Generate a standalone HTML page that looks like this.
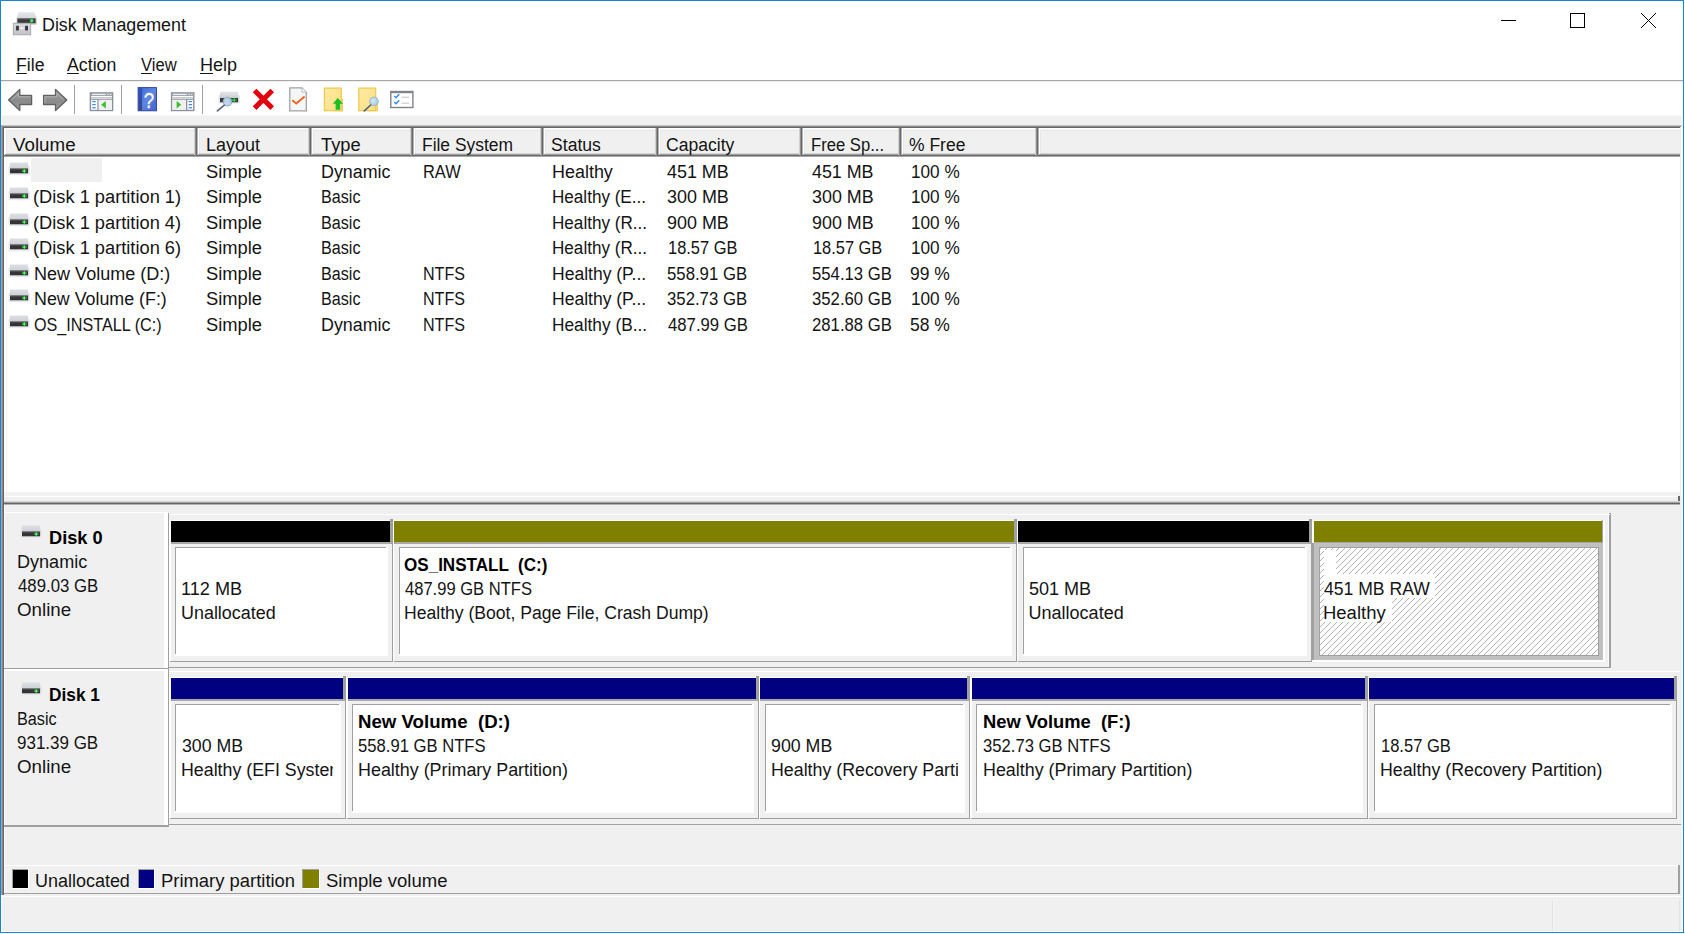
<!DOCTYPE html>
<html lang="en"><head><meta charset="utf-8"><title>Disk Management</title>
<style>
html,body{margin:0;padding:0;background:#fff;}
body{width:1685px;height:934px;position:relative;overflow:hidden;font-family:'Liberation Sans', sans-serif;font-size:18px;line-height:20px;color:#141414;}
#win{position:absolute;left:0;top:0;width:1682px;height:931px;border:1px solid #1883d7;background:#fff;}
#root div,#root svg,#root span.t{position:absolute;}
#root{position:absolute;left:0;top:0;width:1685px;height:934px;}
span.t{white-space:pre;transform-origin:0 0;display:block;}
u{text-decoration-thickness:1px;text-underline-offset:2px;}
</style></head><body>
<div id="win"></div>
<div id="root">
<div style="left:2px;top:115px;width:1680px;height:816px;background:#f0f0f0;"></div>
<svg style="left:1490px;top:5px" width="180" height="32" viewBox="1490 5 180 32" shape-rendering="crispEdges">
<rect x="1501" y="20" width="15" height="1" fill="#000"/>
<rect x="1570.5" y="13.5" width="14" height="14" fill="none" stroke="#000" stroke-width="1"/>
<g shape-rendering="geometricPrecision" stroke="#000" stroke-width="1.0"><line x1="1641" y1="13" x2="1656" y2="28"/><line x1="1656" y1="13" x2="1641" y2="28"/></g>
</svg>
<div style="left:1px;top:80px;width:1682px;height:1px;background:#a6a6a6;"></div>
<div style="left:1px;top:81px;width:1682px;height:1px;background:#f0f0f0;"></div>
<div style="left:74px;top:85px;width:1px;height:29px;background:#a0a0a0;"></div>
<div style="left:121px;top:85px;width:1px;height:29px;background:#a0a0a0;"></div>
<div style="left:202px;top:85px;width:1px;height:29px;background:#a0a0a0;"></div>
<div style="left:2px;top:115px;width:1680px;height:1px;background:#f8f8f8;"></div>
<div style="left:2px;top:125px;width:1680px;height:1px;background:#c4c4c4;"></div>
<div style="left:2px;top:126px;width:1679px;height:1px;background:#8c8c8c;"></div>
<div style="left:3px;top:127px;width:1678px;height:1px;background:#666;"></div>
<div style="left:1px;top:125px;width:1px;height:770px;background:#a8a29e;"></div>
<div style="left:2px;top:126px;width:1px;height:769px;background:#8a8a8a;"></div>
<div style="left:3px;top:127px;width:1px;height:768px;background:#646464;"></div>
<div style="left:4px;top:128px;width:1676px;height:364px;background:#fff;"></div>
<div style="left:1680px;top:127px;width:1px;height:369px;background:#ececec;"></div>
<div style="left:1681px;top:126px;width:1px;height:371px;background:#fff;"></div>
<div style="left:4px;top:128px;width:1676px;height:29px;background:#f0f0f0;"></div>
<div style="left:4px;top:128px;width:1676px;height:1px;background:#fff;"></div>
<div style="left:4px;top:129px;width:1676px;height:1px;background:#f8f8f8;"></div>
<div style="left:4px;top:130px;width:1676px;height:1px;background:#e8e8e8;"></div>
<div style="left:4px;top:153px;width:1676px;height:1px;background:#d4d4d4;"></div>
<div style="left:4px;top:154px;width:1676px;height:1px;background:#a0a0a0;"></div>
<div style="left:4px;top:155px;width:1676px;height:1px;background:#6a6a6a;"></div>
<div style="left:4px;top:156px;width:1676px;height:1px;background:#a8a8a8;"></div>
<div style="left:4px;top:128px;width:1px;height:27px;background:#fff;"></div>
<div style="left:5px;top:129px;width:1px;height:25px;background:#fcfcfc;"></div>
<div style="left:6px;top:130px;width:1px;height:23px;background:#e8e8e8;"></div>
<div style="left:194px;top:128px;width:1px;height:27px;background:#d0d0d0;"></div>
<div style="left:195px;top:128px;width:1px;height:28px;background:#909090;"></div>
<div style="left:196px;top:128px;width:1px;height:28px;background:#686868;"></div>
<div style="left:197px;top:128px;width:1px;height:27px;background:#b4b4b4;"></div>
<div style="left:198px;top:128px;width:1px;height:26px;background:#fff;"></div>
<div style="left:199px;top:130px;width:1px;height:23px;background:#e8e8e8;"></div>
<div style="left:308px;top:128px;width:1px;height:27px;background:#d0d0d0;"></div>
<div style="left:309px;top:128px;width:1px;height:28px;background:#909090;"></div>
<div style="left:310px;top:128px;width:1px;height:28px;background:#686868;"></div>
<div style="left:311px;top:128px;width:1px;height:27px;background:#b4b4b4;"></div>
<div style="left:312px;top:128px;width:1px;height:26px;background:#fff;"></div>
<div style="left:313px;top:130px;width:1px;height:23px;background:#e8e8e8;"></div>
<div style="left:410px;top:128px;width:1px;height:27px;background:#d0d0d0;"></div>
<div style="left:411px;top:128px;width:1px;height:28px;background:#909090;"></div>
<div style="left:412px;top:128px;width:1px;height:28px;background:#686868;"></div>
<div style="left:413px;top:128px;width:1px;height:27px;background:#b4b4b4;"></div>
<div style="left:414px;top:128px;width:1px;height:26px;background:#fff;"></div>
<div style="left:415px;top:130px;width:1px;height:23px;background:#e8e8e8;"></div>
<div style="left:539.5px;top:128px;width:1px;height:27px;background:#d0d0d0;"></div>
<div style="left:540.5px;top:128px;width:1px;height:28px;background:#909090;"></div>
<div style="left:541.5px;top:128px;width:1px;height:28px;background:#686868;"></div>
<div style="left:542.5px;top:128px;width:1px;height:27px;background:#b4b4b4;"></div>
<div style="left:543.5px;top:128px;width:1px;height:26px;background:#fff;"></div>
<div style="left:544.5px;top:130px;width:1px;height:23px;background:#e8e8e8;"></div>
<div style="left:655px;top:128px;width:1px;height:27px;background:#d0d0d0;"></div>
<div style="left:656px;top:128px;width:1px;height:28px;background:#909090;"></div>
<div style="left:657px;top:128px;width:1px;height:28px;background:#686868;"></div>
<div style="left:658px;top:128px;width:1px;height:27px;background:#b4b4b4;"></div>
<div style="left:659px;top:128px;width:1px;height:26px;background:#fff;"></div>
<div style="left:660px;top:130px;width:1px;height:23px;background:#e8e8e8;"></div>
<div style="left:798.5px;top:128px;width:1px;height:27px;background:#d0d0d0;"></div>
<div style="left:799.5px;top:128px;width:1px;height:28px;background:#909090;"></div>
<div style="left:800.5px;top:128px;width:1px;height:28px;background:#686868;"></div>
<div style="left:801.5px;top:128px;width:1px;height:27px;background:#b4b4b4;"></div>
<div style="left:802.5px;top:128px;width:1px;height:26px;background:#fff;"></div>
<div style="left:803.5px;top:130px;width:1px;height:23px;background:#e8e8e8;"></div>
<div style="left:897.5px;top:128px;width:1px;height:27px;background:#d0d0d0;"></div>
<div style="left:898.5px;top:128px;width:1px;height:28px;background:#909090;"></div>
<div style="left:899.5px;top:128px;width:1px;height:28px;background:#686868;"></div>
<div style="left:900.5px;top:128px;width:1px;height:27px;background:#b4b4b4;"></div>
<div style="left:901.5px;top:128px;width:1px;height:26px;background:#fff;"></div>
<div style="left:902.5px;top:130px;width:1px;height:23px;background:#e8e8e8;"></div>
<div style="left:1034.5px;top:128px;width:1px;height:27px;background:#d0d0d0;"></div>
<div style="left:1035.5px;top:128px;width:1px;height:28px;background:#909090;"></div>
<div style="left:1036.5px;top:128px;width:1px;height:28px;background:#686868;"></div>
<div style="left:1037.5px;top:128px;width:1px;height:27px;background:#b4b4b4;"></div>
<div style="left:1038.5px;top:128px;width:1px;height:26px;background:#fff;"></div>
<div style="left:1039.5px;top:130px;width:1px;height:23px;background:#e8e8e8;"></div>
<div style="left:31px;top:157.5px;width:70.5px;height:24.5px;background:#f0f0f0;"></div>
<svg style="left:8px;top:161.8px" width="23" height="14" viewBox="0 0 23 14">
<defs><linearGradient id="dg1" x1="0" y1="0" x2="0" y2="1"><stop offset="0" stop-color="#dcdfe3"/><stop offset="1" stop-color="#cdd0d6"/></linearGradient></defs>
<rect x="0.5" y="4" width="21.3" height="9.3" rx="1.2" fill="#e6e9ee"/>
<path d="M2 0.6h18l0.4 6H1.6z" fill="url(#dg1)"/>
<rect x="2" y="6.6" width="18.1" height="4.7" fill="#343434"/>
<rect x="2" y="6.6" width="18.1" height="1" fill="#5a5a5a"/>
<rect x="14" y="8.4" width="4.6" height="1.3" fill="#2bd23c"/><rect x="15.6" y="6.9" width="1.4" height="4.3" fill="#2bd23c"/><rect x="15.5" y="8.3" width="1.6" height="1.5" fill="#7dff8a"/>
</svg>
<svg style="left:8px;top:187.3px" width="23" height="14" viewBox="0 0 23 14">
<defs><linearGradient id="dg2" x1="0" y1="0" x2="0" y2="1"><stop offset="0" stop-color="#dcdfe3"/><stop offset="1" stop-color="#cdd0d6"/></linearGradient></defs>
<rect x="0.5" y="4" width="21.3" height="9.3" rx="1.2" fill="#e6e9ee"/>
<path d="M2 0.6h18l0.4 6H1.6z" fill="url(#dg2)"/>
<rect x="2" y="6.6" width="18.1" height="4.7" fill="#343434"/>
<rect x="2" y="6.6" width="18.1" height="1" fill="#5a5a5a"/>
<rect x="14" y="8.4" width="4.6" height="1.3" fill="#2bd23c"/><rect x="15.6" y="6.9" width="1.4" height="4.3" fill="#2bd23c"/><rect x="15.5" y="8.3" width="1.6" height="1.5" fill="#7dff8a"/>
</svg>
<svg style="left:8px;top:212.8px" width="23" height="14" viewBox="0 0 23 14">
<defs><linearGradient id="dg3" x1="0" y1="0" x2="0" y2="1"><stop offset="0" stop-color="#dcdfe3"/><stop offset="1" stop-color="#cdd0d6"/></linearGradient></defs>
<rect x="0.5" y="4" width="21.3" height="9.3" rx="1.2" fill="#e6e9ee"/>
<path d="M2 0.6h18l0.4 6H1.6z" fill="url(#dg3)"/>
<rect x="2" y="6.6" width="18.1" height="4.7" fill="#343434"/>
<rect x="2" y="6.6" width="18.1" height="1" fill="#5a5a5a"/>
<rect x="14" y="8.4" width="4.6" height="1.3" fill="#2bd23c"/><rect x="15.6" y="6.9" width="1.4" height="4.3" fill="#2bd23c"/><rect x="15.5" y="8.3" width="1.6" height="1.5" fill="#7dff8a"/>
</svg>
<svg style="left:8px;top:238.3px" width="23" height="14" viewBox="0 0 23 14">
<defs><linearGradient id="dg4" x1="0" y1="0" x2="0" y2="1"><stop offset="0" stop-color="#dcdfe3"/><stop offset="1" stop-color="#cdd0d6"/></linearGradient></defs>
<rect x="0.5" y="4" width="21.3" height="9.3" rx="1.2" fill="#e6e9ee"/>
<path d="M2 0.6h18l0.4 6H1.6z" fill="url(#dg4)"/>
<rect x="2" y="6.6" width="18.1" height="4.7" fill="#343434"/>
<rect x="2" y="6.6" width="18.1" height="1" fill="#5a5a5a"/>
<rect x="14" y="8.4" width="4.6" height="1.3" fill="#2bd23c"/><rect x="15.6" y="6.9" width="1.4" height="4.3" fill="#2bd23c"/><rect x="15.5" y="8.3" width="1.6" height="1.5" fill="#7dff8a"/>
</svg>
<svg style="left:8px;top:263.8px" width="23" height="14" viewBox="0 0 23 14">
<defs><linearGradient id="dg5" x1="0" y1="0" x2="0" y2="1"><stop offset="0" stop-color="#dcdfe3"/><stop offset="1" stop-color="#cdd0d6"/></linearGradient></defs>
<rect x="0.5" y="4" width="21.3" height="9.3" rx="1.2" fill="#e6e9ee"/>
<path d="M2 0.6h18l0.4 6H1.6z" fill="url(#dg5)"/>
<rect x="2" y="6.6" width="18.1" height="4.7" fill="#343434"/>
<rect x="2" y="6.6" width="18.1" height="1" fill="#5a5a5a"/>
<rect x="14" y="8.4" width="4.6" height="1.3" fill="#2bd23c"/><rect x="15.6" y="6.9" width="1.4" height="4.3" fill="#2bd23c"/><rect x="15.5" y="8.3" width="1.6" height="1.5" fill="#7dff8a"/>
</svg>
<svg style="left:8px;top:289.3px" width="23" height="14" viewBox="0 0 23 14">
<defs><linearGradient id="dg6" x1="0" y1="0" x2="0" y2="1"><stop offset="0" stop-color="#dcdfe3"/><stop offset="1" stop-color="#cdd0d6"/></linearGradient></defs>
<rect x="0.5" y="4" width="21.3" height="9.3" rx="1.2" fill="#e6e9ee"/>
<path d="M2 0.6h18l0.4 6H1.6z" fill="url(#dg6)"/>
<rect x="2" y="6.6" width="18.1" height="4.7" fill="#343434"/>
<rect x="2" y="6.6" width="18.1" height="1" fill="#5a5a5a"/>
<rect x="14" y="8.4" width="4.6" height="1.3" fill="#2bd23c"/><rect x="15.6" y="6.9" width="1.4" height="4.3" fill="#2bd23c"/><rect x="15.5" y="8.3" width="1.6" height="1.5" fill="#7dff8a"/>
</svg>
<svg style="left:8px;top:314.8px" width="23" height="14" viewBox="0 0 23 14">
<defs><linearGradient id="dg7" x1="0" y1="0" x2="0" y2="1"><stop offset="0" stop-color="#dcdfe3"/><stop offset="1" stop-color="#cdd0d6"/></linearGradient></defs>
<rect x="0.5" y="4" width="21.3" height="9.3" rx="1.2" fill="#e6e9ee"/>
<path d="M2 0.6h18l0.4 6H1.6z" fill="url(#dg7)"/>
<rect x="2" y="6.6" width="18.1" height="4.7" fill="#343434"/>
<rect x="2" y="6.6" width="18.1" height="1" fill="#5a5a5a"/>
<rect x="14" y="8.4" width="4.6" height="1.3" fill="#2bd23c"/><rect x="15.6" y="6.9" width="1.4" height="4.3" fill="#2bd23c"/><rect x="15.5" y="8.3" width="1.6" height="1.5" fill="#7dff8a"/>
</svg>
<div style="left:4px;top:492px;width:1676px;height:4px;background:#f2f2f2;"></div>
<div style="left:4px;top:496px;width:1674px;height:1px;background:#fff;"></div>
<div style="left:4px;top:497px;width:1674px;height:4px;background:#f0f0f0;"></div>
<div style="left:1677.5px;top:496px;width:2.5px;height:8px;background:#696969;"></div>
<div style="left:4px;top:501px;width:1676px;height:1px;background:#d4d4d4;"></div>
<div style="left:4px;top:502px;width:1676px;height:1px;background:#a0a0a0;"></div>
<div style="left:4px;top:503px;width:1676px;height:1px;background:#666;"></div>
<div style="left:4px;top:504px;width:1676px;height:1px;background:#b4b4b4;"></div>
<div style="left:4px;top:505px;width:1px;height:389px;background:#fff;"></div>
<div style="left:1608px;top:514px;width:1.4px;height:153px;background:#fafafa;"></div>
<div style="left:1609.4px;top:513px;width:1.5px;height:155px;background:#a0a0a0;"></div>
<div style="left:4px;top:512px;width:160px;height:1.4px;background:#fff;"></div>
<div style="left:163.5px;top:512px;width:4px;height:157.5px;background:#fff;"></div>
<div style="left:4px;top:668px;width:164.5px;height:1.5px;background:#a0a0a0;"></div>
<div style="left:168px;top:512.5px;width:1px;height:156px;background:#a0a0a0;"></div>
<div style="left:169px;top:514px;width:1441px;height:1px;background:#fff;"></div>
<div style="left:169px;top:666.6px;width:1442px;height:1.4px;background:#a0a0a0;"></div>
<svg style="left:20px;top:524.8px" width="23" height="14" viewBox="0 0 23 14">
<defs><linearGradient id="dg8" x1="0" y1="0" x2="0" y2="1"><stop offset="0" stop-color="#dcdfe3"/><stop offset="1" stop-color="#cdd0d6"/></linearGradient></defs>
<rect x="0.5" y="4" width="21.3" height="9.3" rx="1.2" fill="#e6e9ee"/>
<path d="M2 0.6h18l0.4 6H1.6z" fill="url(#dg8)"/>
<rect x="2" y="6.6" width="18.1" height="4.7" fill="#343434"/>
<rect x="2" y="6.6" width="18.1" height="1" fill="#5a5a5a"/>
<rect x="14" y="8.4" width="4.6" height="1.3" fill="#2bd23c"/><rect x="15.6" y="6.9" width="1.4" height="4.3" fill="#2bd23c"/><rect x="15.5" y="8.3" width="1.6" height="1.5" fill="#7dff8a"/>
</svg>
<div style="left:169px;top:520px;width:220.60000000000002px;height:1px;background:#fff;"></div>
<div style="left:169px;top:520px;width:1.5px;height:141px;background:#fff;"></div>
<div style="left:170.5px;top:521px;width:219.10000000000002px;height:21px;background:#000;"></div>
<div style="left:389.6px;top:519px;width:3px;height:24px;background:#a0a0a0;"></div>
<div style="left:391.6px;top:543px;width:1px;height:119px;background:#a0a0a0;"></div>
<div style="left:170.5px;top:542px;width:221.10000000000002px;height:1.5px;background:#a8a8a8;"></div>
<div style="left:170px;top:660.7px;width:222.60000000000002px;height:1.3px;background:#a0a0a0;"></div>
<div style="left:175.4px;top:547px;width:212.20000000000002px;height:109px;background:#fff;"></div>
<div style="left:175.4px;top:547px;width:210.20000000000002px;height:1px;background:#a0a0a0;"></div>
<div style="left:175.4px;top:547px;width:1px;height:107px;background:#a0a0a0;"></div>
<div style="left:392.6px;top:520px;width:621.1999999999999px;height:1px;background:#fff;"></div>
<div style="left:392.6px;top:520px;width:1.5px;height:141px;background:#fff;"></div>
<div style="left:394.1px;top:521px;width:619.6999999999999px;height:21px;background:#808000;"></div>
<div style="left:1013.8px;top:519px;width:3px;height:24px;background:#a0a0a0;"></div>
<div style="left:1015.8px;top:543px;width:1px;height:119px;background:#a0a0a0;"></div>
<div style="left:394.1px;top:542px;width:621.6999999999999px;height:1.5px;background:#a8a8a8;"></div>
<div style="left:393.6px;top:660.7px;width:623.1999999999999px;height:1.3px;background:#a0a0a0;"></div>
<div style="left:399.0px;top:547px;width:612.8px;height:109px;background:#fff;"></div>
<div style="left:399.0px;top:547px;width:610.8px;height:1px;background:#a0a0a0;"></div>
<div style="left:399.0px;top:547px;width:1px;height:107px;background:#a0a0a0;"></div>
<div style="left:1016.8px;top:520px;width:292.0px;height:1px;background:#fff;"></div>
<div style="left:1016.8px;top:520px;width:1.5px;height:141px;background:#fff;"></div>
<div style="left:1018.3px;top:521px;width:290.5px;height:21px;background:#000;"></div>
<div style="left:1308.8px;top:519px;width:3px;height:24px;background:#a0a0a0;"></div>
<div style="left:1310.8px;top:543px;width:1px;height:119px;background:#a0a0a0;"></div>
<div style="left:1018.3px;top:542px;width:292.5px;height:1.5px;background:#a8a8a8;"></div>
<div style="left:1017.8px;top:660.7px;width:294.0px;height:1.3px;background:#a0a0a0;"></div>
<div style="left:1023.1999999999999px;top:547px;width:283.6px;height:109px;background:#fff;"></div>
<div style="left:1023.1999999999999px;top:547px;width:281.6px;height:1px;background:#a0a0a0;"></div>
<div style="left:1023.1999999999999px;top:547px;width:1px;height:107px;background:#a0a0a0;"></div>
<div style="left:1312.4px;top:520px;width:288.5999999999999px;height:1px;background:#fff;"></div>
<div style="left:1312.4px;top:520px;width:1.5px;height:141px;background:#fff;"></div>
<div style="left:1313.9px;top:521px;width:287.8999999999999px;height:21px;background:#808000;"></div>
<div style="left:1601.8px;top:519.5px;width:1.3px;height:23px;background:#a0a0a0;"></div>
<div style="left:1603px;top:520px;width:2px;height:142px;background:#fff;"></div>
<div style="left:1312.4px;top:660px;width:292.5999999999999px;height:2px;background:#fff;"></div>
<div style="left:1313.9px;top:542px;width:289.0999999999999px;height:1.5px;background:#a8a8a8;"></div>
<div style="left:1313.6px;top:542.6px;width:289.6px;height:117px;background:#c0c0c0;"></div>
<div style="left:1311.2px;top:542.6px;width:2.6px;height:117.6px;background:#a0a0a0;"></div>
<div style="left:1319px;top:547px;width:280px;height:109px;background:#a0a0a0;"></div>
<svg style="left:1320px;top:548px" width="278" height="107" viewBox="1320 548 278 107" shape-rendering="crispEdges"><defs><pattern id="hat" patternUnits="userSpaceOnUse" x="0" y="0" width="6" height="6"><rect width="6" height="6" fill="#fff"/><g fill="#b0b0b0"><rect x="0" y="2" width="1" height="1"/><rect x="1" y="1" width="1" height="1"/><rect x="2" y="0" width="1" height="1"/><rect x="3" y="5" width="1" height="1"/><rect x="4" y="4" width="1" height="1"/><rect x="5" y="3" width="1" height="1"/></g></pattern></defs><rect x="1320" y="548" width="278" height="107" fill="url(#hat)"/></svg>
<div style="left:1324px;top:550px;width:12px;height:24px;background:#fff;"></div>
<div style="left:1324px;top:574px;width:111px;height:24px;background:#fff;"></div>
<div style="left:1324px;top:598px;width:68px;height:24px;background:#fff;"></div>
<div style="left:4px;top:669.3px;width:160px;height:1.4px;background:#fff;"></div>
<div style="left:163.5px;top:669.3px;width:4px;height:157.5px;background:#fff;"></div>
<div style="left:4px;top:825.3px;width:164.5px;height:1.5px;background:#a0a0a0;"></div>
<div style="left:168px;top:669.8px;width:1px;height:156px;background:#a0a0a0;"></div>
<div style="left:169px;top:671.3px;width:1511px;height:1px;background:#fff;"></div>
<div style="left:169px;top:823.9px;width:1512px;height:1.4px;background:#a0a0a0;"></div>
<svg style="left:20px;top:682.0999999999999px" width="23" height="14" viewBox="0 0 23 14">
<defs><linearGradient id="dg9" x1="0" y1="0" x2="0" y2="1"><stop offset="0" stop-color="#dcdfe3"/><stop offset="1" stop-color="#cdd0d6"/></linearGradient></defs>
<rect x="0.5" y="4" width="21.3" height="9.3" rx="1.2" fill="#e6e9ee"/>
<path d="M2 0.6h18l0.4 6H1.6z" fill="url(#dg9)"/>
<rect x="2" y="6.6" width="18.1" height="4.7" fill="#343434"/>
<rect x="2" y="6.6" width="18.1" height="1" fill="#5a5a5a"/>
<rect x="14" y="8.4" width="4.6" height="1.3" fill="#2bd23c"/><rect x="15.6" y="6.9" width="1.4" height="4.3" fill="#2bd23c"/><rect x="15.5" y="8.3" width="1.6" height="1.5" fill="#7dff8a"/>
</svg>
<div style="left:169px;top:677.3px;width:174px;height:1px;background:#fff;"></div>
<div style="left:169px;top:677.3px;width:1.5px;height:141px;background:#fff;"></div>
<div style="left:170.5px;top:678.3px;width:172.5px;height:21px;background:#000080;"></div>
<div style="left:343px;top:676.3px;width:3px;height:24px;background:#a0a0a0;"></div>
<div style="left:345px;top:700.3px;width:1px;height:119px;background:#a0a0a0;"></div>
<div style="left:170.5px;top:699.3px;width:174.5px;height:1.5px;background:#a8a8a8;"></div>
<div style="left:170px;top:818.0px;width:176px;height:1.3px;background:#a0a0a0;"></div>
<div style="left:175.4px;top:704.3px;width:165.6px;height:109.0px;background:#fff;"></div>
<div style="left:175.4px;top:704.3px;width:163.6px;height:1px;background:#a0a0a0;"></div>
<div style="left:175.4px;top:704.3px;width:1px;height:107.0px;background:#a0a0a0;"></div>
<div style="left:346px;top:677.3px;width:409.79999999999995px;height:1px;background:#fff;"></div>
<div style="left:346px;top:677.3px;width:1.5px;height:141px;background:#fff;"></div>
<div style="left:347.5px;top:678.3px;width:408.29999999999995px;height:21px;background:#000080;"></div>
<div style="left:755.8px;top:676.3px;width:3px;height:24px;background:#a0a0a0;"></div>
<div style="left:757.8px;top:700.3px;width:1px;height:119px;background:#a0a0a0;"></div>
<div style="left:347.5px;top:699.3px;width:410.29999999999995px;height:1.5px;background:#a8a8a8;"></div>
<div style="left:347px;top:818.0px;width:411.79999999999995px;height:1.3px;background:#a0a0a0;"></div>
<div style="left:352.4px;top:704.3px;width:401.4px;height:109.0px;background:#fff;"></div>
<div style="left:352.4px;top:704.3px;width:399.4px;height:1px;background:#a0a0a0;"></div>
<div style="left:352.4px;top:704.3px;width:1px;height:107.0px;background:#a0a0a0;"></div>
<div style="left:758.8px;top:677.3px;width:208.20000000000005px;height:1px;background:#fff;"></div>
<div style="left:758.8px;top:677.3px;width:1.5px;height:141px;background:#fff;"></div>
<div style="left:760.3px;top:678.3px;width:206.70000000000005px;height:21px;background:#000080;"></div>
<div style="left:967px;top:676.3px;width:3px;height:24px;background:#a0a0a0;"></div>
<div style="left:969px;top:700.3px;width:1px;height:119px;background:#a0a0a0;"></div>
<div style="left:760.3px;top:699.3px;width:208.70000000000005px;height:1.5px;background:#a8a8a8;"></div>
<div style="left:759.8px;top:818.0px;width:210.20000000000005px;height:1.3px;background:#a0a0a0;"></div>
<div style="left:765.1999999999999px;top:704.3px;width:199.80000000000007px;height:109.0px;background:#fff;"></div>
<div style="left:765.1999999999999px;top:704.3px;width:197.80000000000007px;height:1px;background:#a0a0a0;"></div>
<div style="left:765.1999999999999px;top:704.3px;width:1px;height:107.0px;background:#a0a0a0;"></div>
<div style="left:970px;top:677.3px;width:394.79999999999995px;height:1px;background:#fff;"></div>
<div style="left:970px;top:677.3px;width:1.5px;height:141px;background:#fff;"></div>
<div style="left:971.5px;top:678.3px;width:393.29999999999995px;height:21px;background:#000080;"></div>
<div style="left:1364.8px;top:676.3px;width:3px;height:24px;background:#a0a0a0;"></div>
<div style="left:1366.8px;top:700.3px;width:1px;height:119px;background:#a0a0a0;"></div>
<div style="left:971.5px;top:699.3px;width:395.29999999999995px;height:1.5px;background:#a8a8a8;"></div>
<div style="left:971px;top:818.0px;width:396.79999999999995px;height:1.3px;background:#a0a0a0;"></div>
<div style="left:976.4px;top:704.3px;width:386.4px;height:109.0px;background:#fff;"></div>
<div style="left:976.4px;top:704.3px;width:384.4px;height:1px;background:#a0a0a0;"></div>
<div style="left:976.4px;top:704.3px;width:1px;height:107.0px;background:#a0a0a0;"></div>
<div style="left:1367.8px;top:677.3px;width:306.0px;height:1px;background:#fff;"></div>
<div style="left:1367.8px;top:677.3px;width:1.5px;height:141px;background:#fff;"></div>
<div style="left:1369.3px;top:678.3px;width:304.5px;height:21px;background:#000080;"></div>
<div style="left:1673.8px;top:676.3px;width:3px;height:24px;background:#a0a0a0;"></div>
<div style="left:1675.8px;top:700.3px;width:1px;height:119px;background:#a0a0a0;"></div>
<div style="left:1369.3px;top:699.3px;width:306.5px;height:1.5px;background:#a8a8a8;"></div>
<div style="left:1368.8px;top:818.0px;width:308.0px;height:1.3px;background:#a0a0a0;"></div>
<div style="left:1374.2px;top:704.3px;width:297.5999999999999px;height:109.0px;background:#fff;"></div>
<div style="left:1374.2px;top:704.3px;width:295.5999999999999px;height:1px;background:#a0a0a0;"></div>
<div style="left:1374.2px;top:704.3px;width:1px;height:107.0px;background:#a0a0a0;"></div>
<div style="left:4px;top:865px;width:1675px;height:1px;background:#fff;"></div>
<div style="left:1678.3px;top:865px;width:1.9px;height:29px;background:#a0a0a0;"></div>
<div style="left:4px;top:892.6px;width:1676px;height:1.6px;background:#a0a0a0;"></div>
<div style="left:11.6px;top:869px;width:17.5px;height:20px;background:#fff;"></div>
<div style="left:11.6px;top:869px;width:16.5px;height:19px;background:#a0a0a0;"></div>
<div style="left:12.6px;top:870px;width:15.5px;height:18px;background:#000;"></div>
<div style="left:137.5px;top:869px;width:17.5px;height:20px;background:#fff;"></div>
<div style="left:137.5px;top:869px;width:16.5px;height:19px;background:#a0a0a0;"></div>
<div style="left:138.5px;top:870px;width:15.5px;height:18px;background:#000080;"></div>
<div style="left:302.4px;top:869px;width:17.5px;height:20px;background:#fff;"></div>
<div style="left:302.4px;top:869px;width:16.5px;height:19px;background:#a0a0a0;"></div>
<div style="left:303.4px;top:870px;width:15.5px;height:18px;background:#808000;"></div>
<div style="left:1px;top:895.5px;width:1682px;height:1.3px;background:#fff;"></div>
<div style="left:1552px;top:900px;width:1px;height:31px;background:#e2e2e2;"></div>
<div style="left:1553px;top:900px;width:1px;height:31px;background:#f8f8f8;"></div>
<div style="left:1679px;top:900px;width:1px;height:31px;background:#e2e2e2;"></div>
<span class="t" style="left:42.31px;top:14.60px;transform:scaleX(0.9917);">Disk Management</span>
<span class="t" style="left:15.72px;top:54.60px;transform:scaleX(0.9815);"><u>F</u>ile</span>
<span class="t" style="left:67.40px;top:54.60px;transform:scaleX(0.9857);"><u>A</u>ction</span>
<span class="t" style="left:140.70px;top:54.60px;transform:scaleX(0.9231);"><u>V</u>iew</span>
<span class="t" style="left:200.00px;top:54.60px;transform:scaleX(1.0029);"><u>H</u>elp</span>
<span class="t" style="left:13.30px;top:135.00px;transform:scaleX(1.0424);">Volume</span>
<span class="t" style="left:206.20px;top:135.00px;transform:scaleX(0.9981);">Layout</span>
<span class="t" style="left:320.70px;top:135.00px;transform:scaleX(1.0158);">Type</span>
<span class="t" style="left:422.43px;top:135.00px;transform:scaleX(0.9674);">File System</span>
<span class="t" style="left:551.12px;top:135.00px;transform:scaleX(0.9776);">Status</span>
<span class="t" style="left:666.42px;top:135.00px;transform:scaleX(0.9754);">Capacity</span>
<span class="t" style="left:811.08px;top:135.00px;transform:scaleX(0.9250);">Free Sp...</span>
<span class="t" style="left:909.43px;top:135.00px;transform:scaleX(0.9714);">% Free</span>
<span class="t" style="left:205.98px;top:162.00px;transform:scaleX(1.0189);">Simple</span>
<span class="t" style="left:320.81px;top:162.00px;transform:scaleX(0.9928);">Dynamic</span>
<span class="t" style="left:422.59px;top:162.00px;transform:scaleX(0.9125);">RAW</span>
<span class="t" style="left:551.80px;top:162.00px;transform:scaleX(0.9967);">Healthy</span>
<span class="t" style="left:667.10px;top:162.00px;transform:scaleX(0.9951);">451 MB</span>
<span class="t" style="left:811.60px;top:162.00px;transform:scaleX(0.9918);">451 MB</span>
<span class="t" style="left:910.94px;top:162.00px;transform:scaleX(0.9551);">100 %</span>
<span class="t" style="left:33.39px;top:187.00px;transform:scaleX(1.0139);">(Disk 1 partition 1)</span>
<span class="t" style="left:205.98px;top:187.00px;transform:scaleX(1.0189);">Simple</span>
<span class="t" style="left:320.90px;top:187.00px;transform:scaleX(0.8977);">Basic</span>
<span class="t" style="left:551.85px;top:187.00px;transform:scaleX(0.9490);">Healthy (E...</span>
<span class="t" style="left:667.00px;top:187.00px;transform:scaleX(0.9967);">300 MB</span>
<span class="t" style="left:811.51px;top:187.00px;transform:scaleX(0.9933);">300 MB</span>
<span class="t" style="left:910.94px;top:187.00px;transform:scaleX(0.9551);">100 %</span>
<span class="t" style="left:33.39px;top:213.00px;transform:scaleX(1.0139);">(Disk 1 partition 4)</span>
<span class="t" style="left:205.98px;top:213.00px;transform:scaleX(1.0189);">Simple</span>
<span class="t" style="left:320.90px;top:213.00px;transform:scaleX(0.8977);">Basic</span>
<span class="t" style="left:551.85px;top:213.00px;transform:scaleX(0.9505);">Healthy (R...</span>
<span class="t" style="left:667.00px;top:213.00px;transform:scaleX(0.9967);">900 MB</span>
<span class="t" style="left:811.51px;top:213.00px;transform:scaleX(0.9933);">900 MB</span>
<span class="t" style="left:910.94px;top:213.00px;transform:scaleX(0.9551);">100 %</span>
<span class="t" style="left:33.39px;top:238.00px;transform:scaleX(1.0139);">(Disk 1 partition 6)</span>
<span class="t" style="left:205.98px;top:238.00px;transform:scaleX(1.0189);">Simple</span>
<span class="t" style="left:320.90px;top:238.00px;transform:scaleX(0.8977);">Basic</span>
<span class="t" style="left:551.85px;top:238.00px;transform:scaleX(0.9505);">Healthy (R...</span>
<span class="t" style="left:668.29px;top:238.00px;transform:scaleX(0.9135);">18.57 GB</span>
<span class="t" style="left:812.79px;top:238.00px;transform:scaleX(0.9108);">18.57 GB</span>
<span class="t" style="left:910.94px;top:238.00px;transform:scaleX(0.9551);">100 %</span>
<span class="t" style="left:33.80px;top:264.00px;transform:scaleX(1.0022);">New Volume (D:)</span>
<span class="t" style="left:205.98px;top:264.00px;transform:scaleX(1.0189);">Simple</span>
<span class="t" style="left:320.90px;top:264.00px;transform:scaleX(0.8977);">Basic</span>
<span class="t" style="left:422.91px;top:264.00px;transform:scaleX(0.8933);">NTFS</span>
<span class="t" style="left:551.83px;top:264.00px;transform:scaleX(0.9734);">Healthy (P...</span>
<span class="t" style="left:667.27px;top:264.00px;transform:scaleX(0.9310);">558.91 GB</span>
<span class="t" style="left:811.77px;top:264.00px;transform:scaleX(0.9286);">554.13 GB</span>
<span class="t" style="left:910.33px;top:264.00px;transform:scaleX(0.9718);">99 %</span>
<span class="t" style="left:33.81px;top:289.00px;transform:scaleX(0.9909);">New Volume (F:)</span>
<span class="t" style="left:205.98px;top:289.00px;transform:scaleX(1.0189);">Simple</span>
<span class="t" style="left:320.90px;top:289.00px;transform:scaleX(0.8977);">Basic</span>
<span class="t" style="left:422.91px;top:289.00px;transform:scaleX(0.8933);">NTFS</span>
<span class="t" style="left:551.83px;top:289.00px;transform:scaleX(0.9734);">Healthy (P...</span>
<span class="t" style="left:667.27px;top:289.00px;transform:scaleX(0.9310);">352.73 GB</span>
<span class="t" style="left:811.77px;top:289.00px;transform:scaleX(0.9286);">352.60 GB</span>
<span class="t" style="left:910.94px;top:289.00px;transform:scaleX(0.9551);">100 %</span>
<span class="t" style="left:33.50px;top:315.00px;transform:scaleX(0.8986);">OS_INSTALL (C:)</span>
<span class="t" style="left:205.98px;top:315.00px;transform:scaleX(1.0189);">Simple</span>
<span class="t" style="left:320.81px;top:315.00px;transform:scaleX(0.9928);">Dynamic</span>
<span class="t" style="left:422.91px;top:315.00px;transform:scaleX(0.8933);">NTFS</span>
<span class="t" style="left:551.84px;top:315.00px;transform:scaleX(0.9604);">Healthy (B...</span>
<span class="t" style="left:667.50px;top:315.00px;transform:scaleX(0.9282);">487.99 GB</span>
<span class="t" style="left:811.77px;top:315.00px;transform:scaleX(0.9286);">281.88 GB</span>
<span class="t" style="left:910.33px;top:315.00px;transform:scaleX(0.9718);">58 %</span>
<span class="t" style="left:48.89px;top:527.70px;transform:scaleX(1.0118);font-weight:bold;color:#000;">Disk 0</span>
<span class="t" style="left:17.10px;top:551.60px;transform:scaleX(1.0029);">Dynamic</span>
<span class="t" style="left:17.70px;top:575.60px;transform:scaleX(0.9318);">489.03 GB</span>
<span class="t" style="left:17.06px;top:599.60px;transform:scaleX(1.0420);">Online</span>
<span class="t" style="left:181.39px;top:578.80px;transform:scaleX(1.0068);">112 MB</span>
<span class="t" style="left:180.90px;top:602.80px;transform:scaleX(0.9957);">Unallocated</span>
<span class="t" style="left:404.25px;top:554.80px;transform:scaleX(0.9477);font-weight:bold;color:#000;">OS_INSTALL  (C:)</span>
<span class="t" style="left:405.20px;top:578.80px;transform:scaleX(0.9197);">487.99 GB NTFS</span>
<span class="t" style="left:404.22px;top:602.80px;transform:scaleX(0.9761);">Healthy (Boot, Page File, Crash Dump)</span>
<span class="t" style="left:1028.60px;top:578.80px;transform:scaleX(1.0017);">501 MB</span>
<span class="t" style="left:1028.60px;top:602.80px;transform:scaleX(1.0000);">Unallocated</span>
<span class="t" style="left:1324.00px;top:578.80px;transform:scaleX(0.9769);">451 MB RAW</span>
<span class="t" style="left:1322.97px;top:602.80px;transform:scaleX(1.0267);">Healthy</span>
<span class="t" style="left:48.94px;top:685.20px;transform:scaleX(0.9596);font-weight:bold;color:#000;">Disk 1</span>
<span class="t" style="left:17.20px;top:709.10px;transform:scaleX(0.9000);">Basic</span>
<span class="t" style="left:16.76px;top:733.10px;transform:scaleX(0.9429);">931.39 GB</span>
<span class="t" style="left:17.06px;top:757.10px;transform:scaleX(1.0420);">Online</span>
<span class="t" style="left:181.61px;top:736.10px;transform:scaleX(0.9850);">300 MB</span>
<div style="left:181.21px;top:760.10px;width:152.29px;height:22px;overflow:hidden"><span class="t" style="left:0;top:0;transform:scaleX(0.9883)">Healthy (EFI System Partition)</span></div>
<span class="t" style="left:358.16px;top:712.10px;transform:scaleX(1.0366);font-weight:bold;color:#000;">New Volume  (D:)</span>
<span class="t" style="left:358.28px;top:736.10px;transform:scaleX(0.9243);">558.91 GB NTFS</span>
<span class="t" style="left:358.21px;top:760.10px;transform:scaleX(0.9943);">Healthy (Primary Partition)</span>
<span class="t" style="left:771.01px;top:736.10px;transform:scaleX(0.9883);">900 MB</span>
<div style="left:770.61px;top:760.10px;width:187.19px;height:22px;overflow:hidden"><span class="t" style="left:0;top:0;transform:scaleX(0.9883)">Healthy (Recovery Partition)</span></div>
<span class="t" style="left:982.58px;top:712.10px;transform:scaleX(1.0196);font-weight:bold;color:#000;">New Volume  (F:)</span>
<span class="t" style="left:982.68px;top:736.10px;transform:scaleX(0.9243);">352.73 GB NTFS</span>
<span class="t" style="left:982.61px;top:760.10px;transform:scaleX(0.9923);">Healthy (Primary Partition)</span>
<span class="t" style="left:1380.68px;top:736.10px;transform:scaleX(0.9176);">18.57 GB</span>
<span class="t" style="left:1380.01px;top:760.10px;transform:scaleX(0.9879);">Healthy (Recovery Partition)</span>
<span class="t" style="left:35.20px;top:870.70px;transform:scaleX(0.9978);">Unallocated</span>
<span class="t" style="left:161.18px;top:870.70px;transform:scaleX(1.0233);">Primary partition</span>
<span class="t" style="left:325.97px;top:870.70px;transform:scaleX(1.0293);">Simple volume</span>
<svg style="left:0;top:4px" width="60" height="36" viewBox="0 4 60 36">
<defs>
<linearGradient id="tg1" x1="0" y1="0" x2="0" y2="1"><stop offset="0" stop-color="#e3e5e8"/><stop offset="1" stop-color="#c9ccd1"/></linearGradient>
<linearGradient id="tg2" x1="0" y1="0" x2="0" y2="1"><stop offset="0" stop-color="#d9d9dd"/><stop offset="1" stop-color="#c2c2c7"/></linearGradient>
<radialGradient id="tled"><stop offset="0" stop-color="#7dff8a"/><stop offset="0.5" stop-color="#35d646"/><stop offset="1" stop-color="#35d646" stop-opacity="0"/></radialGradient>
</defs>
<path d="M18.6 12.2h15.8l2.5 6.2v5.4q0 .9-.9.9H17.3q-.9 0-.9-.9v-5.4z" fill="url(#tg1)"/>
<rect x="17.4" y="18.6" width="18.2" height="4.6" rx=".5" fill="#3a3a3a"/>
<rect x="17.4" y="18.6" width="18.2" height="1" fill="#555"/>
<circle cx="31.7" cy="20.8" r="2.4" fill="url(#tled)"/>
<rect x="13.3" y="23.2" width="17.4" height="11.6" fill="url(#tg2)" stroke="#a4a4a9" stroke-width=".9"/>
<rect x="16" y="25.8" width="2.9" height="4.7" rx=".6" fill="#3c3c3e"/>
<rect x="25.1" y="25.8" width="2.9" height="4.7" rx=".6" fill="#3c3c3e"/>
<rect x="20.2" y="27" width="3.6" height="2.2" fill="#ececef"/>
</svg>
<svg style="left:0;top:82px" width="430" height="33" viewBox="0 82 430 33">
<defs>
<linearGradient id="ag" x1="0" y1="0" x2="0" y2="1"><stop offset="0" stop-color="#a6a6a6"/><stop offset=".55" stop-color="#8a8a8a"/><stop offset="1" stop-color="#9b9b9b"/></linearGradient>
<linearGradient id="hg" x1="0" y1="0" x2="1" y2="1"><stop offset="0" stop-color="#3f68d6"/><stop offset=".5" stop-color="#5f86e2"/><stop offset="1" stop-color="#3f62c8"/></linearGradient>
<linearGradient id="hs" x1="0" y1="0" x2="0" y2="1"><stop offset="0" stop-color="#2a55c8"/><stop offset="1" stop-color="#3a4786"/></linearGradient>
<linearGradient id="fy" x1="0" y1="0" x2="1" y2="1"><stop offset="0" stop-color="#ffeaa0"/><stop offset="1" stop-color="#fbdf84"/></linearGradient>
<radialGradient id="lens" cx=".4" cy=".4" r=".7"><stop offset="0" stop-color="#d4e8f6"/><stop offset="1" stop-color="#9fc3e2"/></radialGradient>
<linearGradient id="dgi" x1="0" y1="0" x2="0" y2="1"><stop offset="0" stop-color="#e2e4e8"/><stop offset="1" stop-color="#cfd2d7"/></linearGradient>
</defs>
<!-- back / forward -->
<path d="M8.6 100 19.8 89.4V95.4H31.6V104.5H19.8V110.5Z" fill="url(#ag)" stroke="#616161" stroke-width="1.3" stroke-linejoin="round"/>
<path d="M11.6 100 18.6 93.4V96.8H30.2" fill="none" stroke="#b9b9b9" stroke-width=".9" opacity=".8"/>
<path d="M66.8 100 55.5 89.4V95.4H43.6V104.5H55.5V110.5Z" fill="url(#ag)" stroke="#616161" stroke-width="1.3" stroke-linejoin="round"/>
<path d="M45 103V96.8H56.7V93.4L63.6 100" fill="none" stroke="#b9b9b9" stroke-width=".9" opacity=".8"/>
<!-- console tree (show/hide) -->
<g>
<rect x="90.4" y="92.9" width="22.2" height="17.6" fill="#fff" stroke="#8a8f98" stroke-width="1.4"/>
<rect x="91" y="93.5" width="21" height="2.4" fill="#9a9fa8"/>
<rect x="92" y="94" width="13.5" height="1" fill="#eef0f3"/><rect x="107.4" y="94" width="1.2" height="1" fill="#eef0f3"/><rect x="110" y="94" width="1.2" height="1" fill="#eef0f3"/>
<rect x="91" y="97" width="21" height="1.4" fill="#c3c7ce"/>
<rect x="91" y="98.8" width="21" height="1" fill="#8a8f98"/>
<rect x="97.4" y="99" width="1.3" height="11" fill="#8a8f98"/>
<rect x="98.8" y="99.9" width="13.2" height="10" fill="#f0f0f0"/>
<rect x="92.3" y="100.9" width="3.4" height="1.3" fill="#3f8ee6"/><rect x="92.3" y="104" width="3.4" height="1.3" fill="#3f8ee6"/><rect x="92.3" y="107.1" width="3.4" height="1.3" fill="#3f8ee6"/>
<path d="M101.1 104.7 105.8 100.9V108.5Z" fill="#3cbf2c"/>
</g>
<g>
<rect x="171.6" y="92.9" width="22.2" height="17.6" fill="#fff" stroke="#8a8f98" stroke-width="1.4"/>
<rect x="172.2" y="93.5" width="21" height="2.4" fill="#9a9fa8"/>
<rect x="173.2" y="94" width="13.5" height="1" fill="#eef0f3"/><rect x="188.6" y="94" width="1.2" height="1" fill="#eef0f3"/><rect x="191.2" y="94" width="1.2" height="1" fill="#eef0f3"/>
<rect x="172.2" y="97" width="21" height="1.4" fill="#c3c7ce"/>
<rect x="172.2" y="98.8" width="21" height="1" fill="#8a8f98"/>
<rect x="186" y="99" width="1.3" height="11" fill="#8a8f98"/>
<rect x="172.4" y="99.9" width="13.5" height="10" fill="#f0f0f0"/>
<rect x="188.6" y="100.9" width="3.4" height="1.3" fill="#3f8ee6"/><rect x="188.6" y="104" width="3.4" height="1.3" fill="#3f8ee6"/><rect x="188.6" y="107.1" width="3.4" height="1.3" fill="#3f8ee6"/>
<path d="M181.3 104.7 176.6 100.9V108.5Z" fill="#3cbf2c"/>
</g>
<!-- help -->
<rect x="138.1" y="87.6" width="18.4" height="23.2" fill="url(#hg)" stroke="#2c3f98" stroke-width=".9"/>
<rect x="138.5" y="88" width="3.6" height="22.4" fill="url(#hs)"/>
<g transform="translate(148.9 0) scale(.84 1) translate(-148.9 0)"><text x="149.5" y="108.5" font-family="'Liberation Sans',sans-serif" font-size="22.5" text-anchor="middle" fill="#1c2f80" opacity=".5">?</text><text x="148.9" y="108" font-family="'Liberation Sans',sans-serif" font-size="22.5" text-anchor="middle" fill="#f4f6fc" stroke="#f4f6fc" stroke-width=".45">?</text></g>
<!-- drive + magnifier -->
<rect x="218.5" y="95" width="21.4" height="8.6" rx="1" fill="#e4e7ec"/>
<path d="M220.2 91.8h17.8l.6 5.6h-19z" fill="url(#dgi)"/>
<rect x="220" y="97.9" width="18.1" height="4.4" fill="#3a3a3a"/>
<rect x="231.9" y="99.5" width="4.6" height="1.3" fill="#2bd23c"/><rect x="233.5" y="98.1" width="1.4" height="4" fill="#2bd23c"/>
<circle cx="227.5" cy="101.7" r="4.4" fill="url(#lens)" fill-opacity=".92" stroke="#8fa6bd" stroke-width=".9"/>
<path d="M224.3 105.2 217.4 110.9" stroke="#5a6a82" stroke-width="1.7" stroke-linecap="round"/>
<!-- red X -->
<path d="M254.6 90.5 272.2 108.1M272.2 90.5 254.6 108.1" fill="none" stroke="#e1000f" stroke-width="5.2"/>
<!-- doc with check -->
<path d="M289.8 87.9H302L306.3 92.2V110.8H289.8Z" fill="#f4f6f8" stroke="#a2a2a2" stroke-width="1.3"/>
<path d="M302 87.9V92.2H306.3" fill="#fff" stroke="#b5b5b5" stroke-width=".9"/>
<path d="M292.3 100.2 296.3 103.6 304.6 96.6" fill="none" stroke="#f0661c" stroke-width="1.9"/>
<!-- folder up -->
<rect x="334" y="99.3" width="8.6" height="11.5" fill="#fbe18a" stroke="#eec94f" stroke-width=".9"/>
<rect x="324.4" y="88.1" width="16.9" height="22.6" fill="url(#fy)" stroke="#eec94f" stroke-width="1.2"/>
<path d="M337.8 98 343 103.8H340.1V109.7H335.6V103.8H332.7Z" fill="#1cc024"/>
<!-- folder search -->
<rect x="369" y="99.3" width="8.5" height="11.5" fill="#fbe18a" stroke="#eec94f" stroke-width=".9"/>
<rect x="358.8" y="88.1" width="16.9" height="22.6" fill="url(#fy)" stroke="#eec94f" stroke-width="1.2"/>
<circle cx="374" cy="101.4" r="4.3" fill="url(#lens)" stroke="#9cb0c4" stroke-width=".9"/>
<path d="M370.7 105 364.3 110.9" stroke="#4c5f84" stroke-width="1.6" stroke-linecap="round"/>
<!-- checklist -->
<rect x="390.8" y="91.5" width="22.1" height="16" fill="#fff" stroke="#808388" stroke-width="1.4"/>
<rect x="390.8" y="91.2" width="22.1" height="2" fill="#808388"/>
<path d="M394.3 96 396 97.7 399.2 94.3" fill="none" stroke="#2b8ae8" stroke-width="1.4"/>
<path d="M394.3 102 396 103.7 399.2 100.3" fill="none" stroke="#2b8ae8" stroke-width="1.4"/>
<rect x="401.5" y="96.7" width="7.6" height="1.1" fill="#c6c6c6"/><rect x="401.5" y="102.6" width="7.6" height="1.1" fill="#c6c6c6"/>
</svg>

</div>
</body></html>
